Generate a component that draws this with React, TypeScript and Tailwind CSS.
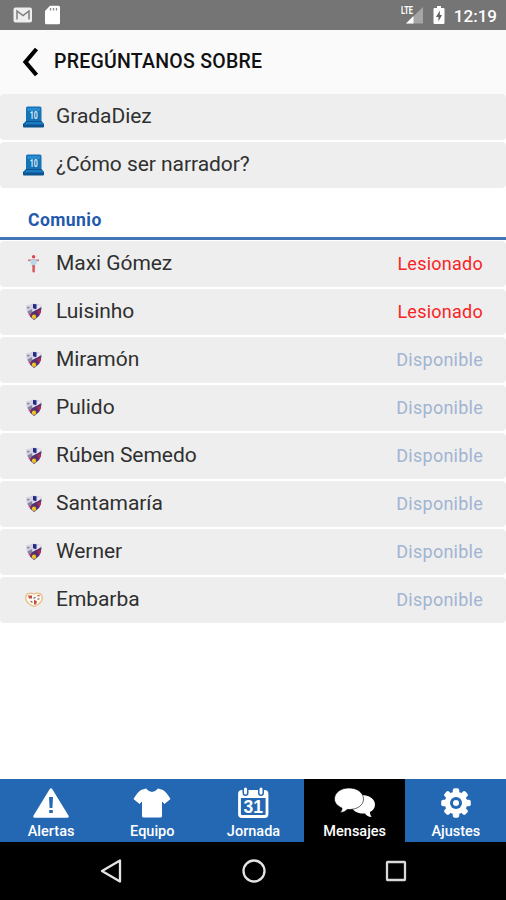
import type { ReactNode } from 'react'
import clsx from 'clsx'

type Crest = 'celta' | 'huesca' | 'rayo'

interface Player {
    name: string
    crest: Crest
    injured?: boolean
}

const topics = ['GradaDiez', '¿Cómo ser narrador?']

const players: Player[] = [
    { name: 'Maxi Gómez', crest: 'celta', injured: true },
    { name: 'Luisinho', crest: 'huesca', injured: true },
    { name: 'Miramón', crest: 'huesca' },
    { name: 'Pulido', crest: 'huesca' },
    { name: 'Rúben Semedo', crest: 'huesca' },
    { name: 'Santamaría', crest: 'huesca' },
    { name: 'Werner', crest: 'huesca' },
    { name: 'Embarba', crest: 'rayo' },
]

function SeatIcon() {
    return (
        <svg width="24" height="24" viewBox="0 0 24 24">
            <path d="M5.500 1.500h12.500q1.500 0 1.500 1.500v15H4V3q0-1.500 1.500-1.500z" fill="#1673b8" />
            <path d="M5.500 3h12.500v3H5.500z" fill="#2a8bcc" />
            <path d="M4 16h15.500l2.500 3v2.500q0 1-1 1H2q-1 0-1-1v-2.500z" fill="#0b5490" />
            <path d="M4 17h15.500l2 2.500H2z" fill="#1a7cc0" />
            <text x="11.800" y="14.200" textAnchor="middle" fontSize="10.500" fontWeight="700" fill="#d9ecf8" textLength="8" lengthAdjust="spacingAndGlyphs">10</text>
        </svg>
    )
}

function CrestIcon({ crest }: { crest: Crest }) {
    if (crest === 'celta') {
        return (
            <svg width="24" height="24" viewBox="0 0 24 24">
                <path d="M10.200 8h2.800l-.5 12.500h-1.700z" fill="#e2686b" />
                <path d="M6 8.300h11" stroke="#e0787c" strokeWidth="1.800" />
                <circle cx="11.600" cy="4.700" r="1.700" fill="#d8484c" />
                <path d="M8.500 7.400h6.200v3.500q-.5 2-3.100 3q-2.600-1-3.100-3z" fill="#b7d8ea" />
                <path d="M11.600 13v7" stroke="#d9585c" strokeWidth="2.200" />
            </svg>
        )
    }
    if (crest === 'rayo') {
        return (
            <svg width="24" height="24" viewBox="0 0 24 24">
                <path d="M6 5.500q3-1 6 .5q3-1.500 6-.5q3.500 3 1.500 7.500q-2.500 4-7.500 5.500q-5-1.500-7.500-5.500q-2-4.500 1.500-7.500z" fill="#fffaf0" stroke="#e6bd80" strokeWidth="1.300" />
                <path d="M6 7.500h4v3h-3zM14.500 8l3-1.500v2zM12 11.500l3 2l-1 3h-2z" fill="#c44d45" />
                <path d="M15.500 11.500l2-1M8.500 13l2 1.500M11.500 10.500l2-1.500" stroke="#76747c" strokeWidth="1.200" />
            </svg>
        )
    }
    return (
        <svg width="24" height="24" viewBox="0 0 24 24">
            <path d="M4 5.500l3-.8L11 3.500l4.500.5l4 1q.8 7-2 10.500q-2.500 3-5.500 4.500q-3.500-2-5.500-5q-2.500-3.500-2.500-9.500z" fill="#d6d6e2" />
            <path d="M5 6.500l3.500 1-3 1.500zM5.500 11.500l4-2.500l1 3l-3.500 3z" fill="#8b849f" />
            <path d="M11 4l3.500.3v5l-3.500-1z" fill="#272986" />
            <path d="M9.500 12.500l10-5.500q0 5.500-2.500 9l-5 4l-4-3.500z" fill="#55306f" />
            <path d="M15 11.500l4.200-2.500q-.4 4-2 6zM7 13.500l3 1-2 2z" fill="#b72b51" />
            <path d="M15.500 5l3 .6v1.500l-4 3z" fill="#e8e6f2" />
            <circle cx="12" cy="16.700" r="2.200" fill="#ecc12e" />
        </svg>
    )
}

function Row({ icon, label, children }: { icon: ReactNode; label: string; children?: ReactNode }) {
    return (
        <li className="flex h-[46px] items-center rounded-[4px] bg-[#eeeeee] pr-[23px] pl-[22px]">
            <span className="w-[34px] shrink-0">{icon}</span>
            <span className="flex-1 pb-[3px] text-[21px] leading-7 tracking-[-0.05px] text-[#303030]">{label}</span>
            {children}
        </li>
    )
}

function AlertIcon() {
    return (
        <svg width="40" height="32" viewBox="0 0 40 32">
            <path d="M20 2.500L36.500 29.500H3.500z" fill="white" stroke="white" strokeWidth="2.500" strokeLinejoin="round" />
            <path d="M18 10h4l-.6 11h-2.800zM18.200 23h3.600v3h-3.600z" fill="#2468b3" />
        </svg>
    )
}

function ShirtIcon() {
    return (
        <svg width="40" height="32" viewBox="0 0 40 32">
            <path d="M14 1.500q6 7 12 0l5 1.500q3 1.500 7.500 9L32.500 17L30 14.500V29q0 1.500-1.500 1.500h-17Q10 30.500 10 29V14.500L7.500 17L1.500 12Q6 4.500 9 3z" fill="white" />
        </svg>
    )
}

function CalendarIcon() {
    return (
        <svg width="40" height="32" viewBox="0 0 40 32">
            <rect x="6.500" y="4.500" width="27.500" height="25" rx="2.500" fill="none" stroke="white" strokeWidth="2.800" />
            <path d="M6 4h28v7H6z" fill="white" />
            <path d="M12.500 1v5M28 1v5" stroke="#2468b3" strokeWidth="6" strokeLinecap="round" />
            <path d="M12.500 2v4M28 2v4" stroke="white" strokeWidth="3" strokeLinecap="round" />
            <text x="20.200" y="26.300" textAnchor="middle" fontSize="17.500" fontWeight="700" fontFamily="Liberation Sans, sans-serif" fill="white">31</text>
        </svg>
    )
}

function ChatIcon() {
    return (
        <svg width="44" height="32" viewBox="0 0 44 32">
            <path d="M29 8c7 0 13 4 13 9.500c0 3.500-2 6-5 7.500c0 2 .5 3.500 1.500 5c-3 0-5-1.500-6.500-3.500c-7 .5-14-3-14-9S22 8 29 8z" fill="white" />
            <path d="M16 1c8 0 14.500 4.500 14.500 11S24 22.500 16 22.500l-2-.1c-1.500 1.800-3.500 3.100-7 3.100c1.500-1.200 2-2.500 2-4.500C4.500 19 1.500 16 1.500 12C1.500 5.500 8 1 16 1z" fill="white" stroke="#000" strokeWidth=".6" />
        </svg>
    )
}

function GearIcon() {
    return (
        <svg width="40" height="32" viewBox="0 0 40 32">
            <g fill="white">
                {[0, 45, 90, 135].map((angle) => (
                    <rect key={angle} x="16.800" y="1.200" width="6.400" height="29.600" rx="2" transform={`rotate(${angle} 20 16)`} />
                ))}
                <circle cx="20" cy="16" r="11.300" />
            </g>
            <circle cx="20" cy="16" r="6" fill="#2468b3" />
            <circle cx="20" cy="16" r="3" fill="white" />
        </svg>
    )
}

const tabs = [
    { label: 'Alertas', icon: <AlertIcon /> },
    { label: 'Equipo', icon: <ShirtIcon /> },
    { label: 'Jornada', icon: <CalendarIcon /> },
    { label: 'Mensajes', icon: <ChatIcon />, active: true },
    { label: 'Ajustes', icon: <GearIcon /> },
]

function StatusBar() {
    return (
        <div className="flex h-[30px] items-center bg-[#757575] pr-[9px] pl-[13px] text-white">
            <svg width="20" height="18" viewBox="0 0 20 18">
                <rect x=".5" y="1.500" width="18.500" height="15" rx="2" fill="#eeeeee" />
                <path d="M4 13.500V5l6 4.500l6-4.500v8.500" fill="none" stroke="#7d7d7d" strokeWidth="1.500" />
            </svg>
            <svg className="ml-[11px]" width="18" height="20" viewBox="0 0 18 20">
                <path d="M6 .8h8.500q1.500 0 1.500 1.500v15.500q0 1.500-1.500 1.500h-12Q1 19.300 1 17.800V6z" fill="white" />
                <path d="M6.500 3v2.500M9.500 3v2.500M12.500 3v2.500" stroke="#8a8a8a" strokeWidth="1.300" />
            </svg>
            <svg className="ml-auto" width="23" height="20" viewBox="0 0 23 20">
                <path d="M22 2v16.500H5z" fill="#a6a6a6" />
                <path d="M12.500 11v7.500H5z" fill="white" />
                <path d="M0 0h13v10H0z" fill="#757575" />
                <text x="0" y="9.300" fontSize="10.500" fontWeight="700" fill="white" textLength="12" lengthAdjust="spacingAndGlyphs">LTE</text>
            </svg>
            <svg className="ml-[9px]" width="12" height="18" viewBox="0 0 12 18">
                <path d="M4 0h4v2h2.500q1 0 1 1v14q0 1-1 1h-9q-1 0-1-1V3q0-1 1-1H4z" fill="white" />
                <path d="M6.800 4.500L3 11h2.500v4.500L9 9H6.800z" fill="#606060" />
            </svg>
            <span className="ml-[9px] pt-0.5 text-[17px] font-medium leading-none">12:19</span>
        </div>
    )
}

export default function App() {
    return (
        <div className="flex h-[900px] w-[506px] flex-col overflow-hidden bg-white font-['Roboto',sans-serif]">
            <StatusBar />

            <header className="flex h-16 items-center bg-[#fafafa] pl-[22px]">
                <svg width="18" height="30" viewBox="0 0 18 30">
                    <path d="M14.500 2L3.500 15L14.500 28" fill="none" stroke="black" strokeWidth="4.200" />
                </svg>
                <h1 className="ml-3.5 text-[19.5px] leading-7 font-medium tracking-[0.25px] text-[#111111]">PREGÚNTANOS SOBRE</h1>
            </header>

            <main className="flex-1">
                <ul className="flex flex-col gap-0.5">
                    {topics.map((topic) => (
                        <Row key={topic} icon={<SeatIcon />} label={topic} />
                    ))}
                </ul>

                <h2 className="flex h-[52px] items-center border-b-[3px] border-[#4375b4] pt-[15px] pl-7 text-[17.5px] font-bold tracking-[0.45px] text-[#2259ad]">
                    Comunio
                </h2>

                <ul className="mt-px flex flex-col gap-0.5">
                    {players.map(({ name, crest, injured }) => (
                        <Row key={name} icon={<CrestIcon crest={crest} />} label={name}>
                            <span className={clsx('pb-px text-[18px] tracking-[0.25px]', injured ? 'text-[#f82424]' : 'text-[#a1b4d2]')}>
                                {injured ? 'Lesionado' : 'Disponible'}
                            </span>
                        </Row>
                    ))}
                </ul>
            </main>

            {/* App tabs */}
            <nav className="grid h-[63px] grid-cols-5 bg-[#2468b3]">
                {tabs.map(({ label, icon, active }) => (
                    <button key={label} className={clsx('flex flex-col items-center pt-2 pl-px text-white', active && 'bg-black')}>
                        {icon}
                        <span className="mt-[3px] text-[14.5px] font-medium leading-[19px]">{label}</span>
                    </button>
                ))}
            </nav>

            {/* Android navigation */}
            <div className="flex h-[58px] items-center justify-between bg-black pr-[98px] pl-[99px]">
                <svg width="24" height="26" viewBox="0 0 24 26">
                    <path d="M21 2.500v21L3 13z" fill="none" stroke="#e4e4e4" strokeWidth="2.300" strokeLinejoin="round" />
                </svg>
                <svg width="26" height="26" viewBox="0 0 26 26">
                    <circle cx="13" cy="13" r="10.500" fill="none" stroke="#e4e4e4" strokeWidth="2.300" />
                </svg>
                <svg width="24" height="24" viewBox="0 0 24 24">
                    <rect x="3" y="3" width="18" height="18" rx=".5" fill="none" stroke="#d8d8d8" strokeWidth="2.300" />
                </svg>
            </div>
        </div>
    )
}
